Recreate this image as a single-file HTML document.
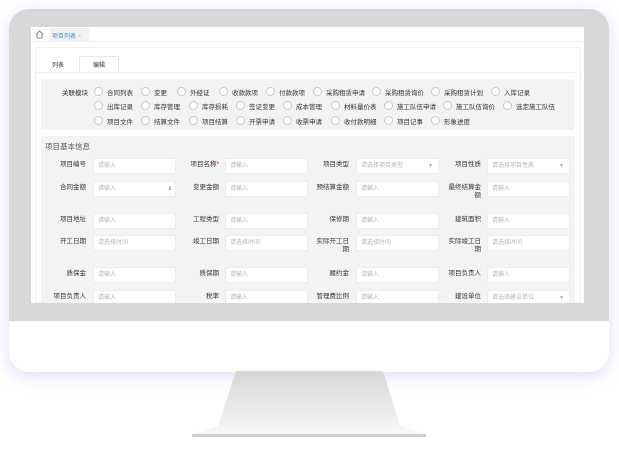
<!DOCTYPE html>
<html><head><meta charset="utf-8"><style>
*{margin:0;padding:0;box-sizing:border-box}
body{width:619px;height:450px;background:#fff;position:relative;overflow:hidden;font-family:"Liberation Sans","Noto Sans CJK SC",sans-serif;font-size:6.5px;color:#333}
.a{position:absolute}
.mon{left:9px;top:9px;width:600px;height:363px;border-radius:20px;background:#fff;box-shadow:0 4px 16px rgba(170,130,240,.3)}
.bez{left:9px;top:9px;width:600px;height:312px;border-radius:20px 20px 0 0;background:#d8d8d8}
.scr{left:31px;top:27px;width:553px;height:276px;background:#fff;overflow:hidden}
.r{position:absolute;width:9px;height:9px;border:1px solid #c8c8c8;border-radius:50%;background:#fff}
.t{position:absolute;white-space:nowrap}
.in{position:absolute;height:16px;background:#fff;border:1px solid #ececec;border-radius:2px;color:#b5b5b5;padding-left:4px;line-height:14px;font-size:6px}
.lb{position:absolute;text-align:right;width:60px;font-size:6.5px;line-height:8px}
</style></head><body>
<div class="a mon"></div>
<div class="a bez"></div>
<svg class="a" style="left:190px;top:371px" width="240" height="75"><defs><linearGradient id="g" x1="0" y1="0" x2="0" y2="1"><stop offset="0" stop-color="#d6d6d6"/><stop offset="1" stop-color="#f8f8f8"/></linearGradient></defs><path d="M46 0H193L210 55L236 63H2L28 55Z" fill="url(#g)"/><rect x="2" y="63" width="234" height="3" fill="#d0d0d0"/></svg>
<div class="a scr">
 <div class="a" style="left:0;top:0;width:553px;height:15px;border-bottom:1px solid #eee"></div>
 <svg class="a" style="left:4px;top:3px" width="9" height="9"><path d="M1 4.5L4.5 1L8 4.5M2 4V8H7V4" fill="none" stroke="#666" stroke-width=".8"/></svg>
 <div class="a" style="left:18px;top:1px;width:40px;height:14px;background:#f2f2f2"></div>
 <div class="t" style="left:21px;top:4px;color:#3a8ee6;font-size:6px">项目列表 <span style="color:#bbb">×</span></div>
 <div class="a" style="left:4px;top:20px;width:546px;height:256px;border:1px solid #f0f0f0"></div>
 <div class="t" style="left:21px;top:33px;font-size:6px">列表</div>
 <div class="a" style="left:48px;top:29px;width:40px;height:17px;border:1px solid #e6e6e6;border-bottom:none;background:#fff"></div>
 <div class="t" style="left:62px;top:33px;font-size:6px">编辑</div>
 <div class="a" style="left:6px;top:45px;width:540px;height:1px;background:#eee"></div>
 <div class="a" style="left:10px;top:52px;width:533px;height:51px;background:#f3f3f3"></div>
 <div class="a" style="left:10px;top:109px;width:534px;height:170px;background:#f3f3f3"></div>
 <div class="t" style="left:31px;top:60px">关联模块</div>
 <div id="rad"></div>
 <div class="t" style="left:14px;top:114px;font-size:7.5px;color:#555">项目基本信息</div>
 <div id="frm"></div>
</div>
<script>
var rows=[[ [67,"合同列表"],[114,"变更"],[150,"外经证"],[192,"收款款项"],[239,"付款款项"],[286,"采购租赁申请"],[345,"采购租赁询价"],[404,"采购租赁计划"],[464,"入库记录"] ],
[[67,"出库记录"],[114,"库存管理"],[162,"库存损耗"],[209,"签证变更"],[256,"成本管理"],[304,"材料量价表"],[357,"施工队伍申请"],[416,"施工队伍询价"],[476,"选定施工队伍"]],
[[67,"项目文件"],[114,"结算文件"],[162,"项目结算"],[209,"开票申请"],[256,"收票申请"],[304,"收付款明细"],[357,"项目记事"],[404,"形象进度"]]];
var h="";rows.forEach(function(r,i){var y=[64,78,93][i];r.forEach(function(c){h+='<div class="r" style="left:'+(c[0]-4)+'px;top:'+(y-4)+'px"></div><div class="t" style="left:'+(c[0]+9)+'px;top:'+(y-4)+'px">'+c[1]+'</div>';});});
document.getElementById("rad").innerHTML=h;
var cols=[[55,62],[188,194],[318,325],[450,456]];
var F=[[139,["项目编号","项目名称<span style=color:red>*</span>","项目类型","项目性质"],["请输入","请输入","请选择项目类型|","请选择项目性质|"]],
[162,["合同金额","变更金额","预结算金额","最终结算金<br>额"],["请输入#","请输入","请输入","请输入"]],
[194,["项目地址","工程类型","保修期","建筑面积"],["请输入","请输入","请输入","请输入"]],
[216,["开工日期","竣工日期","实际开工日<br>期","实际竣工日<br>期"],["请选择时间","请选择时间","请选择时间","请选择时间"]],
[248,["质保金","质保期","履约金","项目负责人"],["请输入","请输入","请输入","请输入"]],
[271,["项目负责人","税率","管理费比例","建设单位"],["请输入","请输入","请输入","请选择建设单位|"]]];
h="";F.forEach(function(f){for(var j=0;j<4;j++){var c=cols[j],p=f[2][j],ex="";
if(p.slice(-1)=="|"){p=p.slice(0,-1);ex='<span style="position:absolute;right:5px;top:0;color:#aaa;font-size:5px">▼</span>';}
if(p.slice(-1)=="#"){p=p.slice(0,-1);ex='<span style="position:absolute;right:3px;top:0;color:#555;font-size:5px">⇕</span>';}
h+='<div class="lb" style="left:'+(c[0]-60)+'px;top:'+(f[0]-5)+'px">'+f[1][j]+'</div><div class="in" style="left:'+c[1]+'px;top:'+(f[0]-8)+'px;width:83px">'+p+ex+'</div>';}});
document.getElementById("frm").innerHTML=h;
</script>
</body></html>
